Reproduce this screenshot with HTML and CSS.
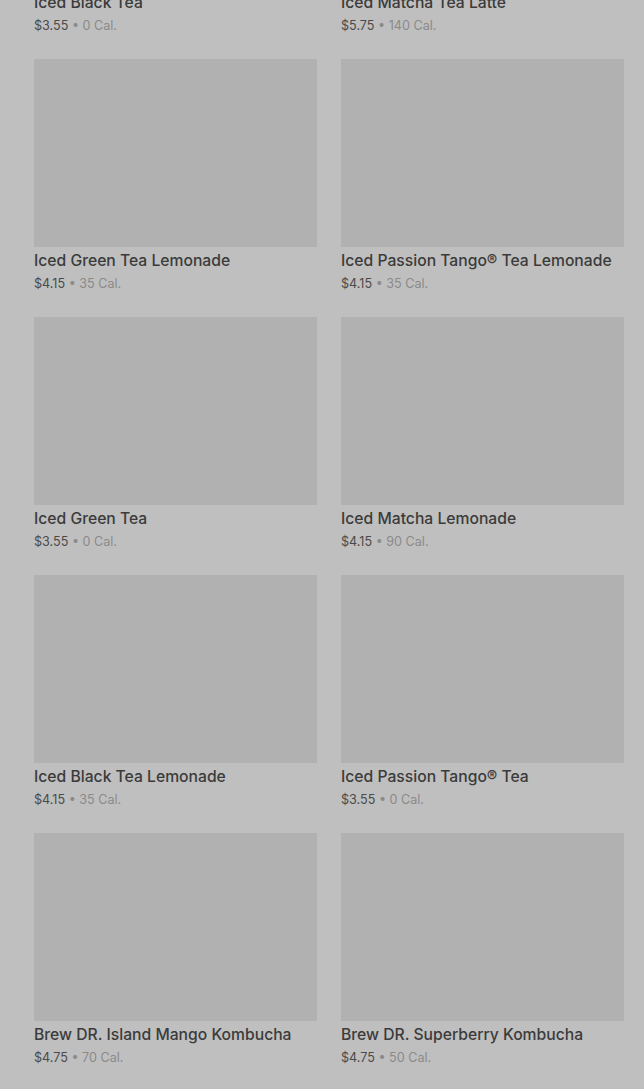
FILE: index.html
```html
<!doctype html>
<html>

<head>
    <title>Menu</title>
    <meta charset="utf-8">
    <link rel="stylesheet" href="styles.css">
</head>

<body>
    <div class="overlay">
        <ul class="grid">
            <li class="card">
                <div class="thumb"></div>
                <p class="name">Iced Black Tea</p>
                <p class="meta"><span class="price">$3.55</span> • 0 Cal.</p>
            </li>
            <li class="card">
                <div class="thumb"></div>
                <p class="name">Iced Matcha Tea Latte</p>
                <p class="meta"><span class="price">$5.75</span> • 140 Cal.</p>
            </li>
            <li class="card">
                <div class="thumb"></div>
                <p class="name">Iced Green Tea Lemonade</p>
                <p class="meta"><span class="price">$4.15</span> • 35 Cal.</p>
            </li>
            <li class="card">
                <div class="thumb"></div>
                <p class="name">Iced Passion Tango® Tea Lemonade</p>
                <p class="meta"><span class="price">$4.15</span> • 35 Cal.</p>
            </li>
            <li class="card">
                <div class="thumb"></div>
                <p class="name">Iced Green Tea</p>
                <p class="meta"><span class="price">$3.55</span> • 0 Cal.</p>
            </li>
            <li class="card">
                <div class="thumb"></div>
                <p class="name">Iced Matcha Lemonade</p>
                <p class="meta"><span class="price">$4.15</span> • 90 Cal.</p>
            </li>
            <li class="card">
                <div class="thumb"></div>
                <p class="name">Iced Black Tea Lemonade</p>
                <p class="meta"><span class="price">$4.15</span> • 35 Cal.</p>
            </li>
            <li class="card">
                <div class="thumb"></div>
                <p class="name">Iced Passion Tango® Tea</p>
                <p class="meta"><span class="price">$3.55</span> • 0 Cal.</p>
            </li>
            <li class="card">
                <div class="thumb"></div>
                <p class="name">Brew DR. Island Mango Kombucha</p>
                <p class="meta"><span class="price">$4.75</span> • 70 Cal.</p>
            </li>
            <li class="card">
                <div class="thumb"></div>
                <p class="name">Brew DR. Superberry Kombucha</p>
                <p class="meta"><span class="price">$4.75</span> • 50 Cal.</p>
            </li>
        </ul>
    </div>
</body>

</html>
```

FILE: styles.css
```css
html,
body {
    margin: 0;
    background-color: #bfbfbf;
    height: 100%;
    overflow: hidden;
}

.overlay {
    padding: 0 20px 0 34px;
}

.grid {
    list-style: none;
    margin: -199px 0 0 0;
    padding: 0;
    display: grid;
    grid-template-columns: 283px 283px;
    column-gap: 24px;
    row-gap: 23px;
}

.thumb {
    height: 188px;
    background-color: #b1b1b1;
}

.name {
    margin: 4px 0 0 0;
    font-family: Inter, Roboto, "Liberation Sans", sans-serif;
    font-weight: 500;
    font-size: 15.7px;
    line-height: 20px;
    color: #3b3b3b;
    white-space: nowrap;
}

.meta {
    margin: 3px 0 0 0;
    font-family: Inter, Roboto, "Liberation Sans", sans-serif;
    font-size: 12.6px;
    line-height: 20px;
    color: #8a8a8a;
}

.price {
    color: #4a4a4a;
}
```
